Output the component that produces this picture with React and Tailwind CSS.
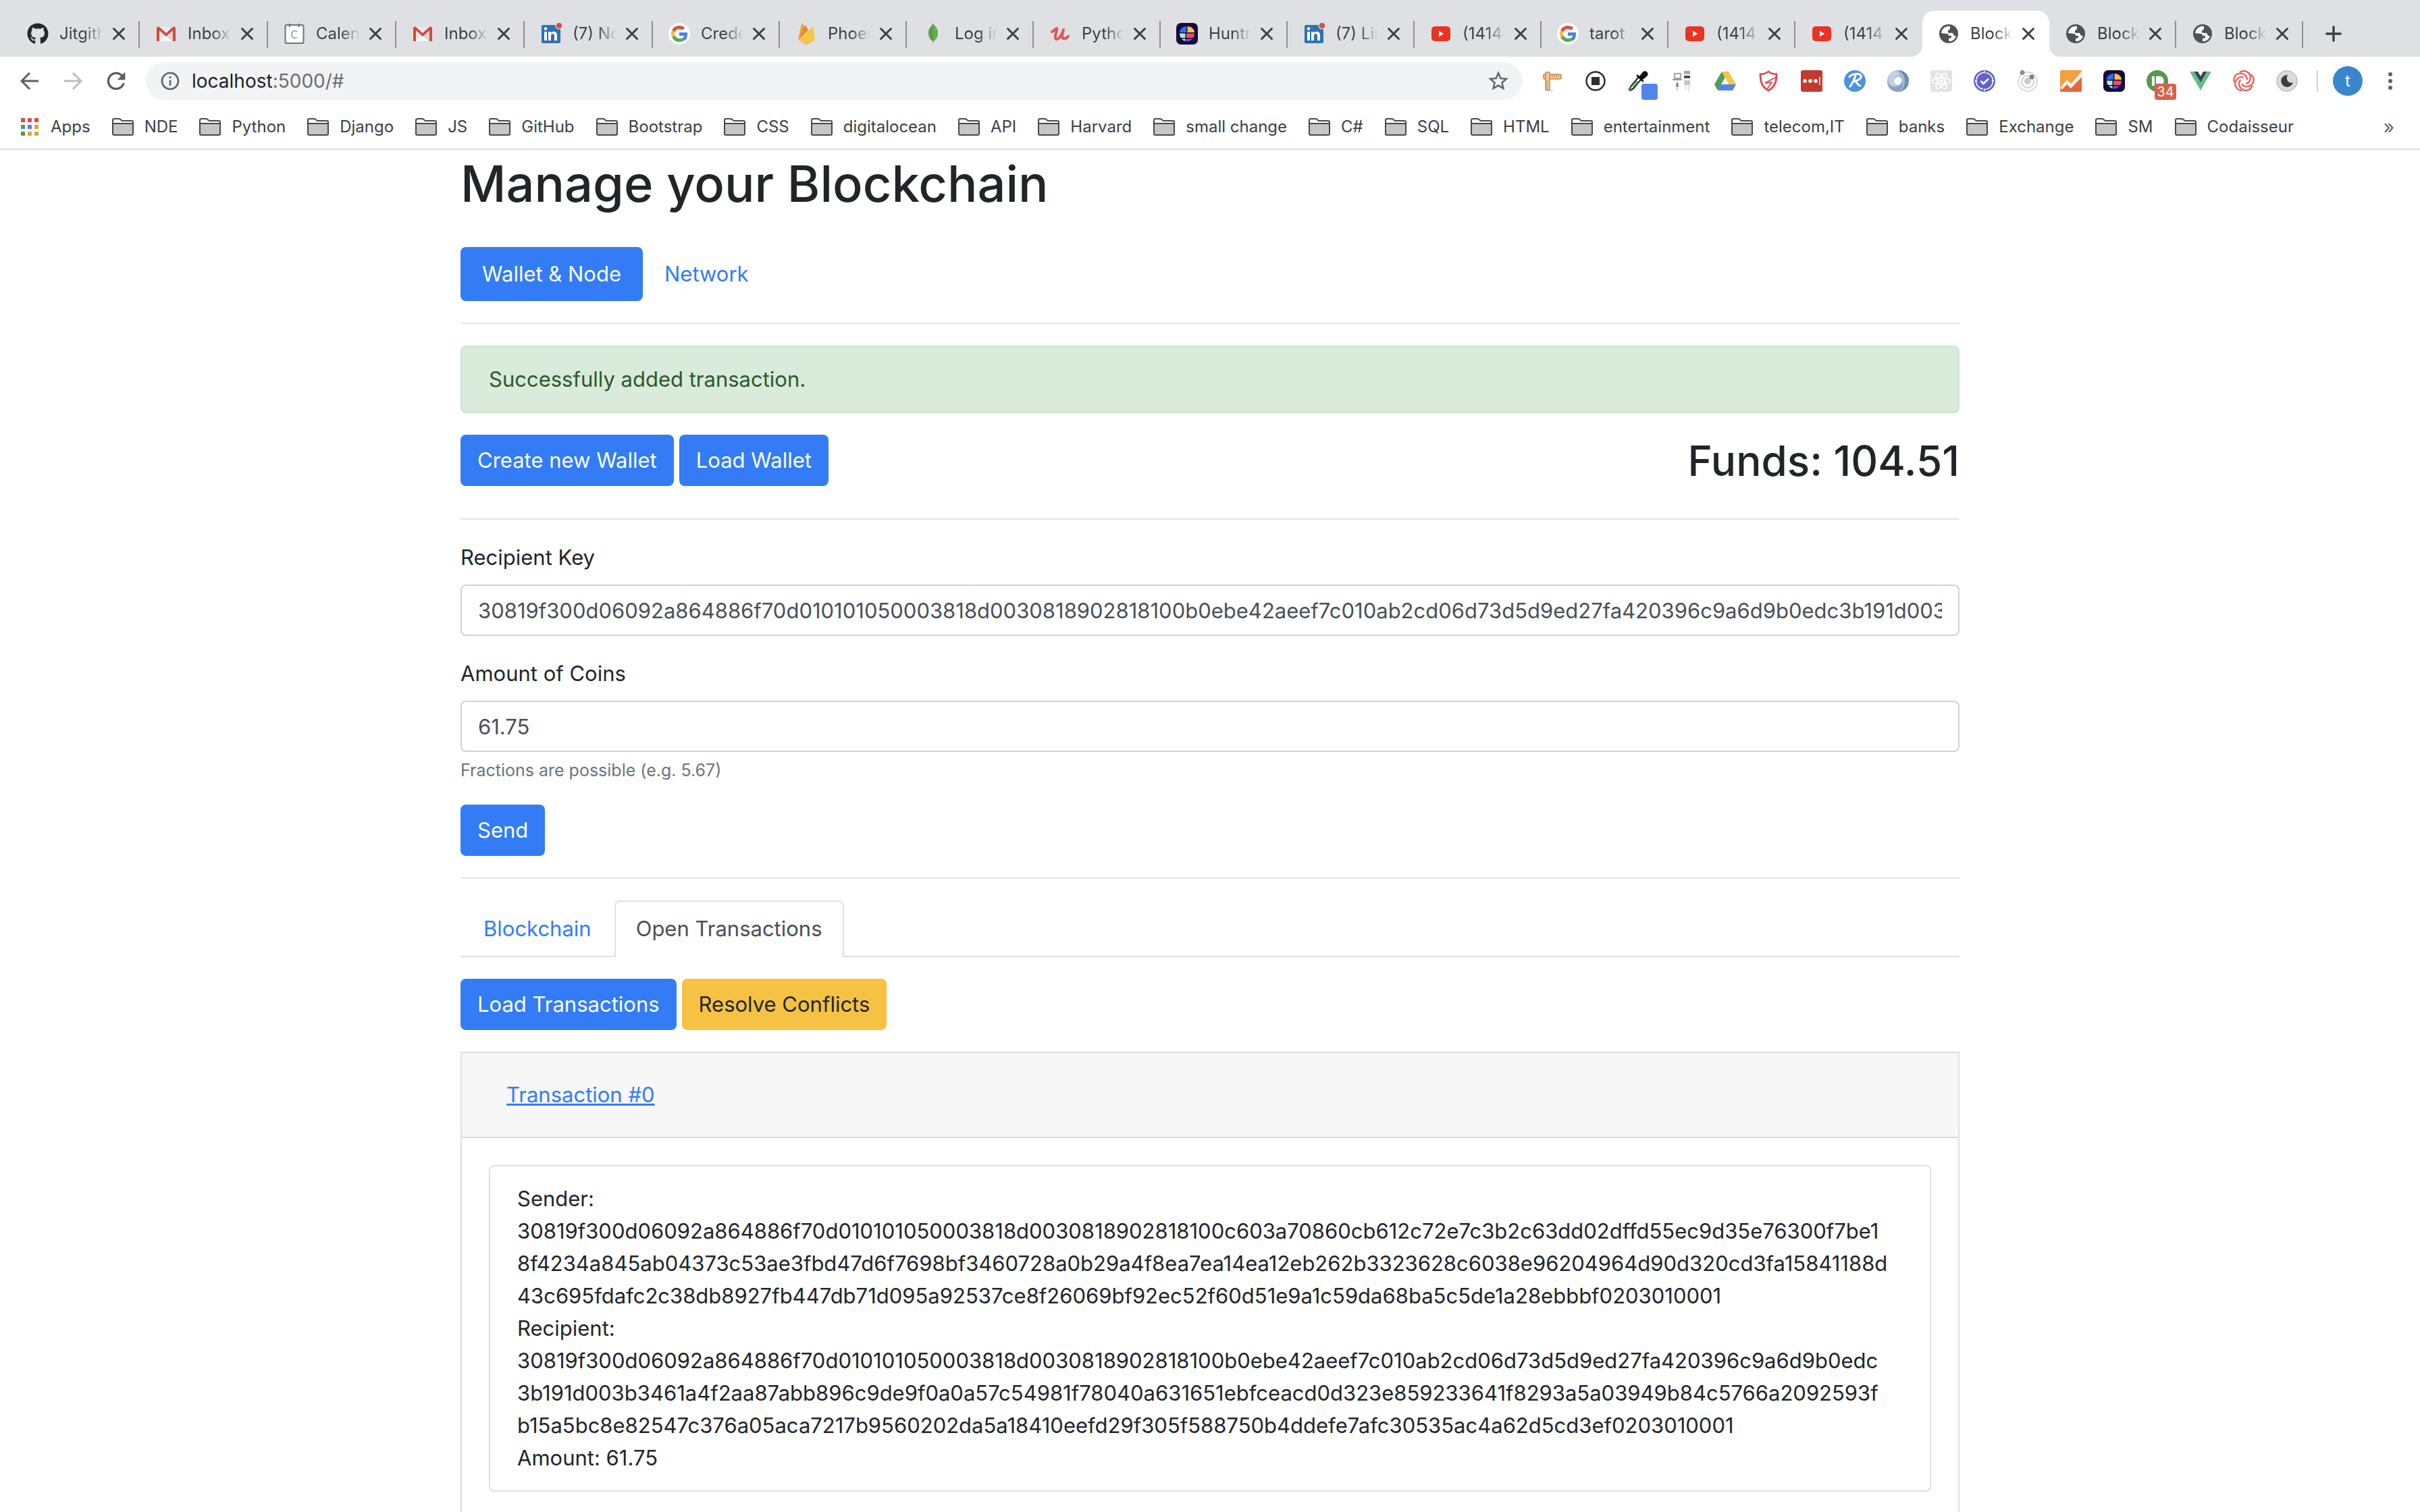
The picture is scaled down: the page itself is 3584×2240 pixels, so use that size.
import { FaGithub } from "react-icons/fa";
import { MdStarBorder, MdInfoOutline, MdRefresh } from "react-icons/md";

/* ---------- site icons ---------- */

function Icon({ children, className = "size-8" }) {
  return (
    <svg viewBox="0 0 32 32" className={className + " shrink-0"} fill="none" aria-hidden="true">
      {children}
    </svg>
  );
}

const Github = () => <FaGithub className="size-8 shrink-0 text-[#24292e]" />;

const Globe = () => (
  <Icon>
    <circle cx="16" cy="16" r="14" fill="#4f5157" />
    <path
      d="M18 5c-6-1-12 3-13 10l8 1c2 0 3 1 3 3h4v3l-4 1v4c5 1 10-3 11-8-2 1-3 0-4-2-1-3-3-2-5-2-3 0-4-1-3-3 0-2 3-1 3-4z"
      fill="#fff"
    />
  </Icon>
);

const Gmail = () => (
  <Icon>
    <path d="M3 6h26v21H3z" fill="#e9e9e9" />
    <path d="M6 27l10-9 10 9z" fill="#f7f7f7" />
    <path d="M16 19l10-9v17h-1z" fill="#c9c9c9" opacity=".6" />
    <path d="M2 8c0-3 3-3 4-2l10 9 10-9c1-1 4-1 4 2v18a1 1 0 0 1-1 1h-3V11l-10 9-10-9v16H3a1 1 0 0 1-1-1z" fill="#d2493a" />
  </Icon>
);

const Calendly = () => (
  <Icon>
    <rect x="2.500" y="3" width="27" height="27" rx="2" fill="#fff" stroke="#6d7080" strokeWidth="2" />
    <path d="M9 1v5M23 1v5M3 30h26" stroke="#6d7080" strokeWidth="2" />
    <path d="M20 13c-4-3-8-.5-8 4s4 7 8 4" stroke="#85878f" strokeWidth="1.300" />
  </Icon>
);

const Linkedin = () => (
  <Icon>
    <rect x="2" y="3" width="28" height="27" rx="2" fill="#2f72b0" />
    <path d="M6 13h4v13H6zM12 13h4v2c2-3.500 9-3 9 3v8h-4v-7c0-4-5-4-5 0v7h-4z" fill="#fff" />
    <circle cx="8" cy="8.500" r="2.300" fill="#fff" />
    <circle cx="28" cy="4" r="5.500" fill="#dee0e4" />
    <circle cx="28" cy="4" r="4.200" fill="#dc4b3e" />
  </Icon>
);

const Google = () => (
  <Icon>
    <circle cx="16" cy="16" r="16" fill="#fff" />
    <path d="M28 14H16v5h7c-.3 1.600-1.200 3-2.600 3.900l4 3.200c2.500-2.300 3.900-5.700 3.600-12.100z" fill="#4b83ee" />
    <path d="M16 28c3.300 0 6.200-1.100 8.400-3l-4-3.100c-3.800 2.500-9.300 1-11-3.600l-4.100 3.200C7.300 25.300 11.300 28 16 28z" fill="#57a75a" />
    <path d="M9.400 18.400a7 7 0 0 1 0-4.800l-4.100-3.200a12 12 0 0 0 0 11.200z" fill="#f3bd42" />
    <path d="M16 9c2 0 3.600.7 4.800 1.800l3.500-3.500C18.500 2 9.200 3.200 5.300 10.400l4.100 3.200C10.400 10.900 13 9 16 9z" fill="#d95140" />
  </Icon>
);

const Firebase = () => (
  <Icon>
    <path d="M4 25L9 1c.2-.8 1-.8 1.300-.2L14 7z" fill="#f0a13a" />
    <path d="M4 25L14 4c.3-.7 1.200-.7 1.500 0L19 11z" fill="#e2882f" />
    <path d="M4 25L25 6.500c.5-.5 1.500-.3 1.600.5L29 25l-11 6.500c-1 .6-2 .6-3 0z" fill="#f5c64a" />
    <path d="M4 25l11 6.500c1 .6 2 .6 3 0L29 25l-11 5.500c-1 .5-2 .5-3 0z" fill="#efb244" />
  </Icon>
);

const Mongo = () => (
  <Icon>
    <path d="M16 0c1 4 7 7 7 15 0 7-5 11-6.500 13h-1C14 26 9 22 9 15 9 7 15 4 16 0z" fill="#5c9e42" />
    <path d="M16 0c1 4 7 7 7 15 0 7-5 11-6.500 13H16z" fill="#6aae4e" />
    <path d="M15.500 26h1l.3 6h-1.500z" fill="#c3bfae" />
  </Icon>
);

const Udemy = () => (
  <Icon>
    <path
      d="M4 13c3-1 5-5 7-5 2 0-3 10-2 14 1 5 8 1 12-12-2 7-3 12 0 13s5-1 7-3"
      stroke="#dd5a55"
      strokeWidth="4"
      strokeLinecap="round"
      strokeLinejoin="round"
    />
  </Icon>
);

const Huntr = () => (
  <Icon>
    <rect width="32" height="32" rx="7" fill="#170b3e" />
    <path d="M15 5v9H5c0-5 5-9 10-9z" fill="#2f6ef0" />
    <path d="M16.500 5C22 5 27 9 27 14H16.500z" fill="#f6c445" />
    <path d="M5 15.500h8.500V22H7c-1-1-2-4-2-6.500z" fill="#9ff7c4" />
    <path d="M15 15.500h12c0 2.500-1 5-2 6.500H15z" fill="#ee4b6b" />
    <path d="M8 23.500h5.500V27C11 26 9 25 8 23.500z" fill="#e4e0ee" />
    <path d="M15 23.500h9C22 26 19 27.500 15 27.500z" fill="#6a50e8" />
  </Icon>
);

const Youtube = () => (
  <Icon>
    <rect x="2" y="5" width="28" height="22" rx="5" fill="#e93323" />
    <path d="M13 11.500v9l7-4.500z" fill="#fff" />
  </Icon>
);

/* ---------- extension icons ---------- */

const extensions = [
  {
    name: "Page ruler",
    icon: (
      <Icon>
        <path d="M5 30h12" stroke="#d9d4ce" strokeWidth="2" />
        <rect x="3" y="6" width="26" height="7" rx="1" fill="#f2cb98" stroke="#c18a58" strokeWidth="1.500" />
        <rect x="6" y="3" width="6" height="26" rx="1" fill="#f2cb98" stroke="#c18a58" strokeWidth="1.500" />
        <path d="M16 7v3M19 7v3M22 7v3M25 7v3M7 17h3M7 20h3M7 23h3M7 26h3" stroke="#b67c48" />
      </Icon>
    ),
  },
  {
    name: "Stop recorder",
    icon: (
      <Icon>
        <circle cx="16" cy="16" r="13.500" stroke="#2d2d2d" strokeWidth="2.500" />
        <rect x="10" y="10" width="12" height="12" fill="#2d2d2d" />
      </Icon>
    ),
  },
  {
    name: "Color picker",
    badge: <span className="absolute left-[20px] top-[20px] h-6 w-6 rounded bg-[#5384ec]" />,
    icon: (
      <Icon>
        <path d="M16 10L5 23c-2 3-3 5-2 7 2 0 4-2 6-4l11-13z" fill="#fff" stroke="#1d1d1d" strokeWidth="2" />
        <path d="M13 16L6 25l2 1 9-10z" fill="#5fae62" />
        <path d="M14 8l8 8M18 10l5-6c2-3 7 0 4 4l-6 5z" fill="#111" stroke="#111" strokeWidth="3" strokeLinecap="round" />
        <circle cx="3" cy="28" r="2.500" fill="#3c8c45" />
      </Icon>
    ),
  },
  {
    name: "Device toolkit",
    icon: (
      <Icon>
        <rect x="5" y="5" width="9" height="7" stroke="#8b8b8b" strokeWidth="1.500" />
        <path d="M2 14h14" stroke="#9a9a9a" strokeWidth="2" />
        <path d="M9 16v4M9 26v5" stroke="#a5a5a5" />
        <rect x="7.500" y="19" width="3" height="6" fill="#777" />
        <rect x="19" y="1" width="9" height="5" fill="#a9a9a9" />
        <rect x="19" y="8" width="9" height="4" fill="#4d4d4d" />
        <rect x="19" y="15" width="9" height="7" fill="#c4c4c4" />
        <path d="M22 23v6M26 23v8" stroke="#c0c0c0" />
      </Icon>
    ),
  },
  {
    name: "Drive",
    icon: (
      <Icon>
        <path d="M11 2L0 21l5 9L16 11z" fill="#4ca05a" />
        <path d="M11 2h10l11 19H21z" fill="#f3c747" />
        <path d="M10 21h22l-5 9H5z" fill="#5183ec" />
        <path d="M16 11l-3 5-3 5h11z" fill="#fff" />
      </Icon>
    ),
  },
  {
    name: "Shield",
    icon: (
      <Icon>
        <path d="M16 2c4 3 8 4 12 4 0 12-3 19-12 24C7 25 4 18 4 6c4 0 8-1 12-4z" stroke="#dc4651" strokeWidth="2.800" />
        <path d="M28 10L11 19l10-1-7 10" stroke="#dc4651" strokeWidth="1.800" />
      </Icon>
    ),
  },
  {
    name: "LastPass",
    icon: (
      <Icon>
        <rect width="32" height="32" rx="3" fill="#c13a30" />
        <circle cx="6" cy="16" r="2.800" fill="#fff" />
        <circle cx="14" cy="16" r="2.800" fill="#fff" />
        <circle cx="22" cy="16" r="2.800" fill="#fff" />
        <path d="M28 10v12" stroke="#fff" strokeWidth="1.500" />
      </Icon>
    ),
  },
  {
    name: "Rebrandly",
    icon: (
      <Icon>
        <circle cx="16" cy="16" r="16" fill="#4b92e0" />
        <path
          d="M8 10c3-5 15-6 17-2s-5 8-10 8c4 0 4 6 9 7M17 8c-2 6-4 11-8 16"
          stroke="#fff"
          strokeWidth="3"
          strokeLinecap="round"
          strokeLinejoin="round"
        />
      </Icon>
    ),
  },
  {
    name: "JSON viewer",
    icon: (
      <Icon>
        <circle cx="16" cy="16" r="11" stroke="#a3b8d3" strokeWidth="10" />
        <path d="M16 0c9 1 16 7 16 16s-7 16-16 16c7-2 10-8 10-16S22 3 16 0z" fill="#6f8fb8" />
        <path d="M16 32C6 32 0 25 0 16c2 6 7 10 13 9 5-1 8-5 8-10 3 8 1 13-5 17z" fill="#87a2c6" />
        <path d="M13 1C4 3 0 10 2 17s9 8 12 6c-4-2-5-6-4-10s4-6 8-4c0-4-2-7-5-8z" fill="#c3d0e2" />
        <path d="M17 0c9 1 15 8 15 16-1-6-7-13-15-16z" fill="#53759f" />
        <ellipse cx="16" cy="16" rx="4.500" ry="6" fill="#fff" />
      </Icon>
    ),
  },
  {
    name: "React tools",
    icon: (
      <Icon>
        <rect width="32" height="32" rx="3" fill="#e3e3e3" />
        <g stroke="#fff" strokeWidth="1.600">
          <ellipse cx="16" cy="16" rx="13" ry="5" />
          <ellipse cx="16" cy="16" rx="13" ry="5" transform="rotate(60 16 16)" />
          <ellipse cx="16" cy="16" rx="13" ry="5" transform="rotate(120 16 16)" />
        </g>
        <circle cx="16" cy="16" r="2.500" fill="#fff" />
      </Icon>
    ),
  },
  {
    name: "Clockify",
    icon: (
      <Icon>
        <circle cx="16" cy="16" r="16" fill="#6461c9" />
        <circle cx="16" cy="16" r="12.500" stroke="#fff" strokeWidth="1.500" strokeDasharray="16 3.630" strokeDashoffset="-2" />
        <path d="M16 1v4M16 27v4" stroke="#fff" strokeWidth="1.500" />
        <circle cx="3.500" cy="16" r="1.700" fill="#fff" />
        <circle cx="28.500" cy="16" r="1.700" fill="#fff" />
        <path d="M10.500 16l4 4 7.500-7.500" stroke="#fff" strokeWidth="2.800" />
      </Icon>
    ),
  },
  {
    name: "Orbit",
    icon: (
      <Icon>
        <circle cx="16" cy="17" r="14" stroke="#d8d8d8" strokeWidth="2" />
        <circle cx="16" cy="17" r="9" stroke="#d2d2d2" strokeWidth="2" />
        <circle cx="16" cy="16" r="5" fill="#cbcbcb" />
        <circle cx="8" cy="3.500" r="3.500" fill="#8d8d8d" />
        <circle cx="22" cy="10" r="3.500" fill="#7d7d7d" />
      </Icon>
    ),
  },
  {
    name: "Analytics",
    icon: (
      <Icon>
        <rect width="32" height="32" rx="2" fill="#f2a03c" />
        <path d="M0 30l10-13 6 6L32 6v24a2 2 0 0 1-2 2H2a2 2 0 0 1-2-2z" fill="#e8643a" />
        <path d="M1 25l9-11 6 6L32 2v8L16 27l-6-6-7 8z" fill="#f4f1ee" />
      </Icon>
    ),
  },
  { name: "Huntr clipper", icon: <Huntr /> },
  {
    name: "Pushbullet",
    badge: (
      <span className="absolute left-[12px] top-[20px] flex h-6 w-8 items-center justify-center rounded bg-[#d8604b] text-[20px] leading-none text-white">
        34
      </span>
    ),
    icon: (
      <Icon>
        <circle cx="16" cy="16" r="16" fill="#5a964f" />
        <path d="M8 9h4v14H8zM14 9h5c9 0 9 14 0 14h-5z" fill="#fff" />
      </Icon>
    ),
  },
  {
    name: "Vue tools",
    icon: (
      <Icon>
        <path d="M0 2h6.500L16 18l9.500-16H32L16 30z" fill="#65bb88" />
        <path d="M6.500 2H12l4 7 4-7h5.500L16 18z" fill="#34435b" />
      </Icon>
    ),
  },
  {
    name: "Spiral",
    icon: (
      <Icon>
        <g stroke="#ea6360" strokeWidth="2.400">
          <path d="M10 3c6-4 13-1 15 4s0 12-6 13" />
          <path d="M10 3c6-4 13-1 15 4s0 12-6 13" transform="rotate(72 16 16)" />
          <path d="M10 3c6-4 13-1 15 4s0 12-6 13" transform="rotate(144 16 16)" />
          <path d="M10 3c6-4 13-1 15 4s0 12-6 13" transform="rotate(216 16 16)" />
          <path d="M10 3c6-4 13-1 15 4s0 12-6 13" transform="rotate(288 16 16)" />
        </g>
      </Icon>
    ),
  },
  {
    name: "Night mode",
    icon: (
      <Icon>
        <circle cx="16" cy="16" r="15.300" fill="#dadada" stroke="#a9a9a9" />
        <path d="M17 7a9 9 0 1 0 8 11c-5 3-12-3-8-11z" fill="#3f3f3f" />
      </Icon>
    ),
  },
];

/* ---------- browser chrome ---------- */

const tabs = [
  { icon: <Github />, title: "Jitgithub", wide: true },
  { icon: <Gmail />, title: "Inbox", wide: true },
  { icon: <Calendly />, title: "Calen", wide: true },
  { icon: <Gmail />, title: "Inbox", wide: true },
  { icon: <Linkedin />, title: "(7) No", wide: true },
  { icon: <Google />, title: "Crede" },
  { icon: <Firebase />, title: "Phoen" },
  { icon: <Mongo />, title: "Log in" },
  { icon: <Udemy />, title: "Pytho" },
  { icon: <Huntr />, title: "Huntr" },
  { icon: <Linkedin />, title: "(7) Lin" },
  { icon: <Youtube />, title: "(1414" },
  { icon: <Google />, title: "tarot" },
  { icon: <Youtube />, title: "(1414" },
  { icon: <Youtube />, title: "(1414", noDivider: true },
  { icon: <Globe />, title: "Block", active: true },
  { icon: <Globe />, title: "Block" },
  { icon: <Globe />, title: "Block" },
];

function Tab({ tab }) {
  const width = tab.wide ? "w-[190px]" : "w-[188px]";
  return (
    <div
      className={`${width} relative flex h-[68px] shrink items-center pl-[23px] pr-5 ${
        tab.active ? "rounded-t-[18px] bg-white" : ""
      }`}
    >
      {tab.icon}
      <button
        type="button"
        className="ml-4 min-w-0 flex-1 overflow-hidden whitespace-nowrap text-left text-[24px] leading-8 text-[#3c4043] [mask-image:linear-gradient(to_right,black_55%,transparent)]"
      >
        {tab.title}
      </button>
      <button type="button" aria-label="Close tab" className="ml-3 shrink-0">
        <svg viewBox="0 0 22 22" className="size-[22px]" stroke="#3c4043" strokeWidth="3" strokeLinecap="round">
          <path d="M3.500 3.500l15 15M18.500 3.500l-15 15" />
        </svg>
      </button>
      {tab.active ? (
        <>
          <svg viewBox="0 0 16 16" className="absolute -left-4 bottom-0 size-4" fill="#fff">
            <path d="M16 0v16H0A16 16 0 0 0 16 0z" />
          </svg>
          <svg viewBox="0 0 16 16" className="absolute -right-4 bottom-0 size-4" fill="#fff">
            <path d="M0 0v16h16A16 16 0 0 1 0 0z" />
          </svg>
        </>
      ) : (
        !tab.noDivider && <span className="absolute right-0 top-[15px] h-10 w-0.5 bg-[#8d9095]" />
      )}
    </div>
  );
}

function TabStrip() {
  return (
    <div className="flex h-[84px] items-end bg-[#dee0e4] pl-[17px]">
      {tabs.map((tab, i) => (
        <Tab key={i} tab={tab} />
      ))}
      <button type="button" aria-label="New tab" className="flex h-[68px] w-[90px] items-center justify-center">
        <svg viewBox="0 0 24 24" className="size-6" stroke="#3c4043" strokeWidth="3.400" strokeLinecap="round">
          <path d="M12 1.700v20.600M1.700 12h20.600" />
        </svg>
      </button>
    </div>
  );
}

function Arrow({ flip, className }) {
  return (
    <svg viewBox="0 0 28 28" className={`size-7 ${className}`} fill="none" stroke="currentColor" strokeWidth="3">
      {flip ? <path d="M1 14h24M14 2l12 12-12 12" /> : <path d="M27 14H3M14 2L2 14l12 12" />}
    </svg>
  );
}

function Toolbar() {
  return (
    <div className="flex h-[72px] items-center bg-white pl-[30px] pr-[41px]">
      <button type="button" aria-label="Back">
        <Arrow className="text-[#5a5d61]" />
      </button>
      <button type="button" aria-label="Forward" className="ml-9">
        <Arrow flip className="text-[#babcbe]" />
      </button>
      <button type="button" aria-label="Reload" className="ml-[30px]">
        <MdRefresh className="size-10 text-[#5a5d61]" />
      </button>
      <div className="ml-6 flex h-14 min-w-0 flex-1 items-center rounded-full bg-[#f1f3f4] pl-5 pr-[18px]">
        <MdInfoOutline className="size-8 shrink-0 text-[#5f6368]" />
        <div className="ml-4 flex-1 text-[28px] leading-9 text-[#6a6d71]">
          <span className="text-[#202124]">localhost</span>:5000/#
        </div>
        <button type="button" aria-label="Bookmark this page">
          <MdStarBorder className="size-9 text-[#5f6368]" />
        </button>
      </div>
      <div className="ml-7 flex items-center gap-8">
        {extensions.map((ext) => (
          <button key={ext.name} type="button" aria-label={ext.name} className="relative">
            {ext.icon}
            {ext.badge}
          </button>
        ))}
      </div>
      <span className="ml-7 h-8 w-0.5 bg-[#cfd1d4]" />
      <button
        type="button"
        aria-label="Profile"
        className="ml-[22px] flex size-11 items-center justify-center rounded-full bg-[#3a86cc] text-[24px] leading-none text-white"
      >
        t
      </button>
      <button type="button" aria-label="Menu" className="ml-[38px] flex flex-col gap-1">
        <span className="size-1.5 rounded-full bg-[#5f6368]" />
        <span className="size-1.5 rounded-full bg-[#5f6368]" />
        <span className="size-1.5 rounded-full bg-[#5f6368]" />
      </button>
    </div>
  );
}

const bookmarks = [
  "NDE", "Python", "Django", "JS", "GitHub", "Bootstrap", "CSS", "digitalocean", "API", "Harvard",
  "small change", "C#", "SQL", "HTML", "entertainment", "telecom,IT", "banks", "Exchange", "SM", "Codaisseur",
];

function BookmarksBar() {
  return (
    <nav className="flex h-[66px] items-center whitespace-nowrap border-b-2 border-[#dcdde1] bg-white pl-[31px] pr-[38px] text-[24px] leading-8 text-[#3c4043]">
      <a href="#" className="flex items-center gap-[18px]">
        <svg viewBox="0 0 26 26" className="size-[26px]">
          <path d="M0 0h6v6H0zM10 0h6v6h-6zM20 0h6v6h-6z" fill="#e0463a" />
          <path d="M0 10h6v6H0zM0 20h6v6H0z" fill="#52985b" />
          <path d="M10 10h6v6h-6z" fill="#4a85ee" />
          <path d="M20 10h6v6h-6zM10 20h6v6h-6zM20 20h6v6h-6z" fill="#e3a33a" />
        </svg>
        Apps
      </a>
      {bookmarks.map((name) => (
        <a key={name} href="#" className="ml-8 flex items-center gap-4">
          <svg viewBox="0 0 32 26" className="h-[26px] w-8" fill="none">
            <path d="M1 23V3a2 2 0 0 1 2-2h8l4 3h14a2 2 0 0 1 2 2v17a2 2 0 0 1-2 2H3a2 2 0 0 1-2-2z" fill="#fff" />
            <path d="M2 9h28v15H2z" fill="#c6c6c6" />
            <path
              d="M1 8h30M1 23V3a2 2 0 0 1 2-2h8l4 3h14a2 2 0 0 1 2 2v17a2 2 0 0 1-2 2H3a2 2 0 0 1-2-2z"
              stroke="#484848"
              strokeWidth="2"
            />
          </svg>
          {name}
        </a>
      ))}
      <button type="button" aria-label="More bookmarks" className="ml-auto text-[28px] leading-8 text-[#5f6368]">
        »
      </button>
    </nav>
  );
}

/* ---------- page ---------- */

function Button({ tone = "blue", children }) {
  const color = tone === "yellow" ? "bg-[#f5c244] text-[#212529]" : "bg-[#337cf6] text-white";
  return (
    <button type="button" className={`${color} h-[76px] rounded-lg px-[25px] leading-[48px]`}>
      {children}
    </button>
  );
}

const inputClass =
  "mt-4 block h-[76px] w-full rounded-lg border-2 border-[#ced4da] bg-white px-6 leading-[48px] text-[#495057] outline-none";

const recipientLines = [
  "30819f300d06092a864886f70d010101050003818d0030818902818100b0ebe42aeef7c010ab2cd06d73d5d9ed27fa420396c9a6d9b0edc",
  "3b191d003b3461a4f2aa87abb896c9de9f0a0a57c54981f78040a631651ebfceacd0d323e859233641f8293a5a03949b84c5766a2092593f",
  "b15a5bc8e82547c376a05aca7217b9560202da5a18410eefd29f305f588750b4ddefe7afc30535ac4a62d5cd3ef0203010001",
];

const senderLines = [
  "30819f300d06092a864886f70d010101050003818d0030818902818100c603a70860cb612c72e7c3b2c63dd02dffd55ec9d35e76300f7be1",
  "8f4234a845ab04373c53ae3fbd47d6f7698bf3460728a0b29a4f8ea7ea14ea12eb262b3323628c6038e96204964d90d320cd3fa15841188d",
  "43c695fdafc2c38db8927fb447db71d095a92537ce8f26069bf92ec52f60d51e9a1c59da68ba5c5de1a28ebbbf0203010001",
];

function KeyLines({ lines }) {
  return lines.map((line) => (
    <span key={line} className="block">
      {line}
    </span>
  ));
}

function Rule({ className }) {
  return <hr className={`${className} border-t-2 border-[#e5e5e5]`} />;
}

function BlockchainPage() {
  return (
    <main className="mx-auto w-full max-w-[2220px] text-[31px] leading-[48px] text-[#212529]">
      <h1 className="pt-0.5 text-[74px] font-medium leading-[96px]">Manage your Blockchain</h1>

      <nav className="mt-[46px] flex">
        <a href="#" className="rounded-lg bg-[#337cf6] px-8 py-4 text-white">
          Wallet &amp; Node
        </a>
        <a href="#" className="px-8 py-4 text-[#337cf6]">
          Network
        </a>
      </nav>
      <Rule className="mt-8" />

      <div role="alert" className="mt-8 rounded-lg border-2 border-[#c9e4cf] bg-[#d9ebdb] px-10 py-6 text-[#2b592d]">
        Successfully added transaction.
      </div>

      <div className="mt-8 flex items-start justify-between">
        <div className="flex gap-2">
          <Button>Create new Wallet</Button>
          <Button>Load Wallet</Button>
        </div>
        <h2 className="text-[62px] font-medium leading-[78px]">Funds: 104.51</h2>
      </div>
      <Rule className="mt-[46px]" />

      <form className="mt-8">
        <label htmlFor="recipient" className="block">
          Recipient Key
        </label>
        <input id="recipient" type="text" defaultValue={recipientLines.join("")} className={inputClass} />
        <label htmlFor="amount" className="mt-8 block">
          Amount of Coins
        </label>
        <input id="amount" type="text" defaultValue="61.75" className={inputClass} />
        <small className="mb-8 mt-2 block text-[25px] leading-[38px] text-[#6c757d]">
          Fractions are possible (e.g. 5.67)
        </small>
        <Button>Send</Button>
      </form>
      <Rule className="mt-8" />

      <nav className="mt-8 flex border-b-2 border-[#dfe1e6]">
        <a href="#" className="border-2 border-b-0 border-transparent px-8 py-4 text-[#337cf6]">
          Blockchain
        </a>
        <a
          href="#"
          className="-mb-0.5 rounded-t-lg border-2 border-b-0 border-[#dfe1e6] bg-white px-[30px] pb-[18px] pt-4 text-[#495057]"
        >
          Open Transactions
        </a>
      </nav>

      <div className="mt-8 flex gap-2">
        <Button>Load Transactions</Button>
        <Button tone="yellow">Resolve Conflicts</Button>
      </div>

      <section className="mt-8 border-2 border-b-0 border-[#dfdfdf]">
        <header className="border-b-2 border-[#d8d8d8] bg-[#f7f7f7] px-[66px] py-[38px]">
          <a href="#" className="text-[#337cf6] underline">
            Transaction #0
          </a>
        </header>
        <div className="p-10">
          <div className="rounded-lg border-2 border-[#dfdfdf] px-10 py-6">
            <p>Sender:</p>
            <p>
              <KeyLines lines={senderLines} />
            </p>
            <p>Recipient:</p>
            <p>
              <KeyLines lines={recipientLines} />
            </p>
            <p>Amount: 61.75</p>
          </div>
        </div>
      </section>
    </main>
  );
}

export default function App() {
  return (
    <div className="h-screen overflow-hidden bg-white font-['Inter',sans-serif]">
      <TabStrip />
      <Toolbar />
      <BookmarksBar />
      <BlockchainPage />
    </div>
  );
}
